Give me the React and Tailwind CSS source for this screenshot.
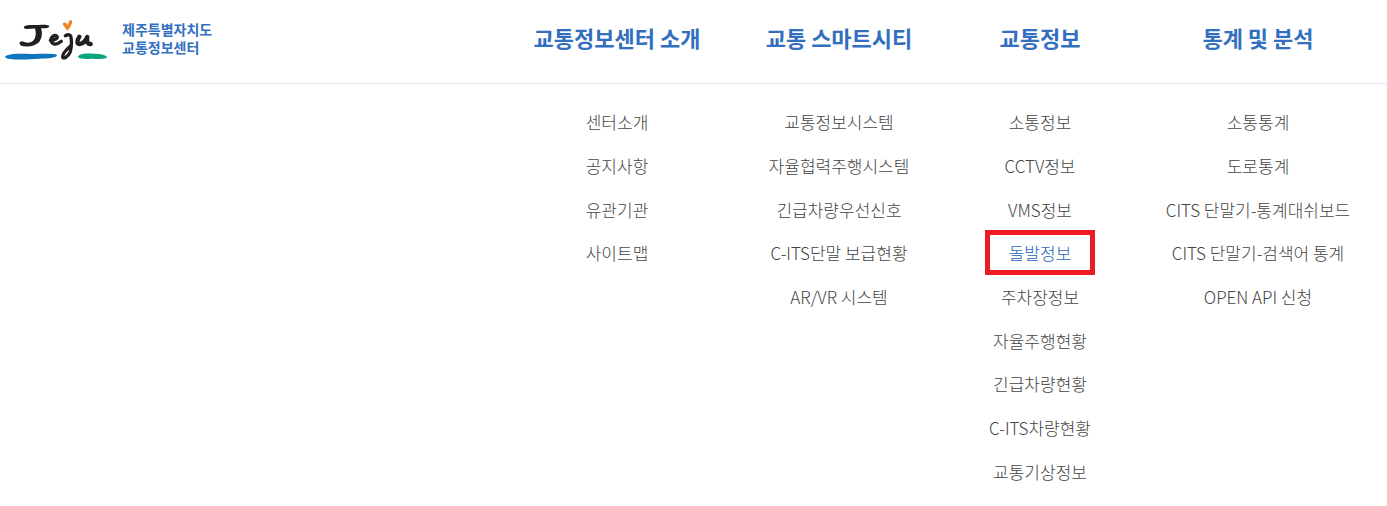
import React, { useState } from 'react';

const MENUS = [
  {
    title: '교통정보센터 소개',
    items: ['센터소개', '공지사항', '유관기관', '사이트맵'],
  },
  {
    title: '교통 스마트시티',
    items: ['교통정보시스템', '자율협력주행시스템', '긴급차량우선신호', 'C-ITS단말 보급현황', 'AR/VR 시스템'],
  },
  {
    title: '교통정보',
    items: [
      '소통정보',
      'CCTV정보',
      'VMS정보',
      '돌발정보',
      '주차장정보',
      '자율주행현황',
      '긴급차량현황',
      'C-ITS차량현황',
      '교통기상정보',
    ],
  },
  {
    title: '통계 및 분석',
    items: ['소통통계', '도로통계', 'CITS 단말기-통계대쉬보드', 'CITS 단말기-검색어 통계', 'OPEN API 신청'],
  },
];

function JejuLogo() {
  return (
    <svg viewBox="0 0 312 126" className="h-[42px] w-[104px]" fill="none" role="img" aria-label="Jeju">
      {/* sea and land strokes */}
      <path d="M3 113C12 104 45 104 84 105C120 104 158 103 159 108C159 116 137 119 105 119C72 122 7 125 3 113Z" fill="#0f75bf" />
      <path d="M222 112C229 103 248 103 269 104C291 104 307 108 309 114C307 121 282 120 263 119C242 120 222 121 222 112Z" fill="#0aa680" />
      {/* heart */}
      <path d="M190 36C185 25 174 20 177 13C181 8 189 12 192 19C193 9 197 1 202 4C208 7 203 21 190 36Z" fill="#f58220" />
      {/* brush lettering */}
      <path
        d="M60 27C57 20 68 17 90 18C108 18 127 15 135 20C138 28 123 28 111 28C116 43 114 58 106 68C92 84 54 87 47 76C44 69 53 64 61 69C71 73 84 71 90 62C97 52 96 38 93 29C81 28 67 33 60 27Z"
        fill="#231f20"
      />
      <g stroke="#231f20" strokeLinecap="round" strokeLinejoin="round">
        <path d="M139 64C153 65 165 56 158 51C149 46 137 57 142 68C147 79 160 77 172 67" strokeWidth="10" />
        <path d="M184 50C192 46 200 46 201 54C203 67 203 86 198 100C192 114 178 120 176 115C174 107 188 91 202 79" strokeWidth="10" />
        <path d="M226 53C217 66 219 76 228 75C238 73 246 63 250 54C247 67 251 76 260 75" strokeWidth="13" />
      </g>
    </svg>
  );
}

export default function App() {
  const [active, setActive] = useState('돌발정보');

  return (
    <header className="grid grid-cols-[507fr_220fr_224fr_178fr_258fr] bg-white font-['Noto_Sans_CJK_KR',sans-serif]">
      <div className="h-[84px] border-b border-[#e4ebf5] pt-[19px] pl-1">
        <a href="#home" className="flex items-start gap-[14px]">
          <JejuLogo />
          <span className="pt-[1px] text-[14px] leading-[18px] font-bold text-[#326fc0]">
            제주특별자치도
            <br />
            교통정보센터
          </span>
        </a>
      </div>

      {MENUS.map((menu) => (
        <nav key={menu.title} aria-label={menu.title} className="text-center whitespace-nowrap">
          <h2 className="h-[84px] border-b border-[#e4ebf5] pt-[21px] text-[22px] leading-[32px] font-bold text-[#326fc0]">
            <a href="#menu">{menu.title}</a>
          </h2>
          <ul className="mt-4 grid min-h-[393px] grid-rows-9 justify-items-center text-[17px] leading-[35px] font-light">
            {menu.items.map((item) => (
              <li key={item} className="flex items-center">
                <a
                  href="#page"
                  aria-current={item === active ? 'page' : undefined}
                  onClick={() => setActive(item)}
                  className={
                    item === active
                      ? 'px-[19px] text-[#1f63bd] outline-5 outline-[#ed1c24]'
                      : 'text-[#444444]'
                  }
                >
                  {item}
                </a>
              </li>
            ))}
          </ul>
        </nav>
      ))}
    </header>
  );
}
